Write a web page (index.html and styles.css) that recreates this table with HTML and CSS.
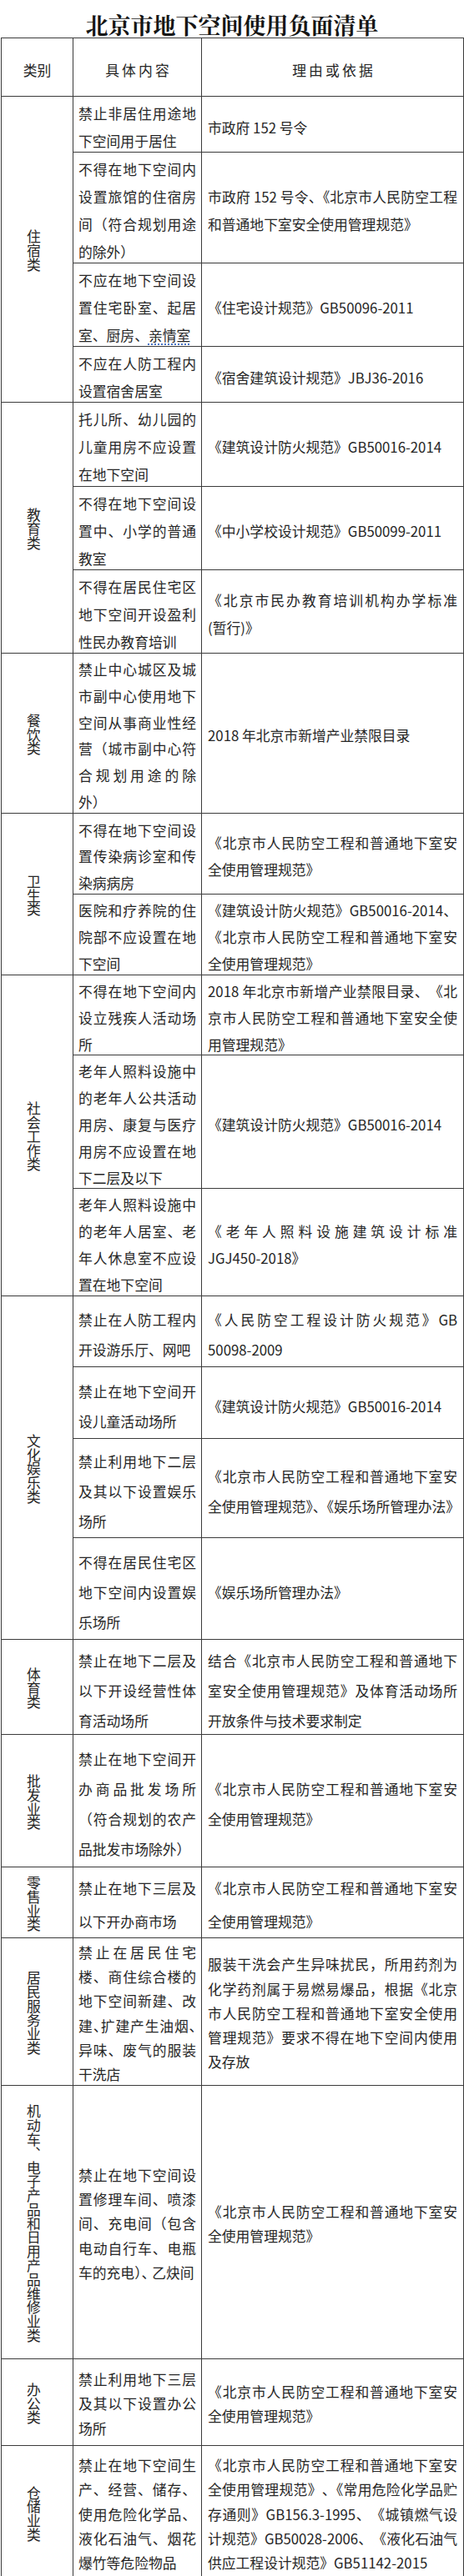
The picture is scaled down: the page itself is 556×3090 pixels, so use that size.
FILE: index.html
```html
<!DOCTYPE html>
<html lang="zh-CN">
<head>
<meta charset="utf-8">
<title>北京市地下空间使用负面清单</title>
<link rel="stylesheet" href="styles.css">
</head>
<body>
<h1 class="title">北京市地下空间使用负面清单</h1>
<table class="list">
  <colgroup><col class="c-cat"><col class="c-item"><col class="c-basis"></colgroup>
  <thead>
    <tr>
      <th class="h-cat"><div class="tx">类别</div></th>
      <th class="h-item"><div class="tx">具体内容</div></th>
      <th class="h-basis"><div class="tx">理由或依据</div></th>
    </tr>
  </thead>
  <tbody>
    <tr class="lh-a">
      <td class="cat" rowspan="4"><div class="cat-in"><span class="vt">住宿类</span></div></td>
      <td class="item"><div class="tx">禁止非居住用途地下空间用于居住</div></td>
      <td class="basis"><div class="tx">市政府 152 号令</div></td>
    </tr>
    <tr class="lh-a">
      <td class="item"><div class="tx">不得在地下空间内设置旅馆的住宿房间（符合规划用途的除外）</div></td>
      <td class="basis"><div class="tx">市政府 152 号令<span class="pt">、</span>《北京市人民防空工程和普通地下室安全使用管理规范》</div></td>
    </tr>
    <tr class="lh-a">
      <td class="item"><div class="tx">不应在地下空间设置住宅卧室、起居室、厨房、<span class="squiggle">亲情室</span></div></td>
      <td class="basis"><div class="tx">《住宅设计规范》GB50096-2011</div></td>
    </tr>
    <tr class="lh-a">
      <td class="item"><div class="tx">不应在人防工程内设置宿舍居室</div></td>
      <td class="basis"><div class="tx">《宿舍建筑设计规范》JBJ36-2016</div></td>
    </tr>

    <tr class="lh-a">
      <td class="cat" rowspan="3"><div class="cat-in"><span class="vt">教育类</span></div></td>
      <td class="item"><div class="tx">托儿所、幼儿园的儿童用房不应设置在地下空间</div></td>
      <td class="basis"><div class="tx">《建筑设计防火规范》GB50016-2014</div></td>
    </tr>
    <tr class="lh-a">
      <td class="item"><div class="tx">不得在地下空间设置中、小学的普通教室</div></td>
      <td class="basis"><div class="tx">《中小学校设计规范》GB50099-2011</div></td>
    </tr>
    <tr class="lh-a">
      <td class="item"><div class="tx">不得在居民住宅区地下空间开设盈利性民办教育培训</div></td>
      <td class="basis"><div class="tx">《北京市民办教育培训机构办学标准<span class="nobr">(暂行)》</span></div></td>
    </tr>

    <tr class="lh-b">
      <td class="cat"><div class="cat-in"><span class="vt">餐饮类</span></div></td>
      <td class="item"><div class="tx">禁止中心城区及城市副中心使用地下空间从事商业性经营（城市副中心符合规划用途的除外）</div></td>
      <td class="basis"><div class="tx">2018 年北京市新增产业禁限目录</div></td>
    </tr>

    <tr class="lh-c">
      <td class="cat" rowspan="2"><div class="cat-in"><span class="vt">卫生类</span></div></td>
      <td class="item"><div class="tx">不得在地下空间设置传染病诊室和传染病病房</div></td>
      <td class="basis"><div class="tx">《北京市人民防空工程和普通地下室安全使用管理规范》</div></td>
    </tr>
    <tr class="lh-c">
      <td class="item"><div class="tx">医院和疗养院的住院部不应设置在地下空间</div></td>
      <td class="basis"><div class="tx">《建筑设计防火规范》<span class="nobr">GB50016-2014、</span>《北京市人民防空工程和普通地下室安全使用管理规范》</div></td>
    </tr>

    <tr class="lh-c">
      <td class="cat" rowspan="3"><div class="cat-in"><span class="vt">社会工作类</span></div></td>
      <td class="item"><div class="tx">不得在地下空间内设立残疾人活动场所</div></td>
      <td class="basis"><div class="tx">2018 年北京市新增产业禁限目录、《北京市人民防空工程和普通地下室安全使用管理规范》</div></td>
    </tr>
    <tr class="lh-c">
      <td class="item"><div class="tx">老年人照料设施中的老年人公共活动用房、康复与医疗用房不应设置在地下二层及以下</div></td>
      <td class="basis"><div class="tx">《建筑设计防火规范》GB50016-2014</div></td>
    </tr>
    <tr class="lh-c">
      <td class="item"><div class="tx">老年人照料设施中的老年人居室、老年人休息室不应设置在地下空间</div></td>
      <td class="basis"><div class="tx">《老年人照料设施建筑设计标准<span class="nobr">JGJ450-2018》</span></div></td>
    </tr>

    <tr class="lh-d">
      <td class="cat" rowspan="4"><div class="cat-in"><span class="vt">文化娱乐类</span></div></td>
      <td class="item"><div class="tx">禁止在人防工程内开设游乐厅、网吧</div></td>
      <td class="basis"><div class="tx">《人民防空工程设计防火规范》GB <span class="nobr">50098-2009</span></div></td>
    </tr>
    <tr class="lh-d">
      <td class="item"><div class="tx">禁止在地下空间开设儿童活动场所</div></td>
      <td class="basis"><div class="tx">《建筑设计防火规范》GB50016-2014</div></td>
    </tr>
    <tr class="lh-d">
      <td class="item"><div class="tx">禁止利用地下二层及其以下设置娱乐场所</div></td>
      <td class="basis"><div class="tx">《北京市人民防空工程和普通地下室安全使用管理规范<span class="pt">》、</span>《娱乐场所管理办法<span class="pt">》</span></div></td>
    </tr>
    <tr class="lh-d">
      <td class="item"><div class="tx">不得在居民住宅区地下空间内设置娱乐场所</div></td>
      <td class="basis"><div class="tx">《娱乐场所管理办法》</div></td>
    </tr>

    <tr class="lh-d">
      <td class="cat"><div class="cat-in"><span class="vt">体育类</span></div></td>
      <td class="item"><div class="tx">禁止在地下二层及以下开设经营性体育活动场所</div></td>
      <td class="basis"><div class="tx">结合《北京市人民防空工程和普通地下室安全使用管理规范》及体育活动场所开放条件与技术要求制定</div></td>
    </tr>

    <tr class="lh-d">
      <td class="cat"><div class="cat-in"><span class="vt">批发业类</span></div></td>
      <td class="item"><div class="tx">禁止在地下空间开办商品批发场所（符合规划的农产品批发市场除外）</div></td>
      <td class="basis"><div class="tx">《北京市人民防空工程和普通地下室安全使用管理规范》</div></td>
    </tr>

    <tr class="lh-e">
      <td class="cat"><div class="cat-in"><span class="vt">零售业类</span></div></td>
      <td class="item"><div class="tx">禁止在地下三层及以下开办商市场</div></td>
      <td class="basis"><div class="tx">《北京市人民防空工程和普通地下室安全使用管理规范》</div></td>
    </tr>

    <tr class="lh-f">
      <td class="cat"><div class="cat-in"><span class="vt">居民服务业类</span></div></td>
      <td class="item"><div class="tx">禁止在居民住宅楼、商住综合楼的地下空间新建、改建<span class="pt">、</span>扩建产生油烟<span class="pt">、</span>异味、废气的服装干洗店</div></td>
      <td class="basis"><div class="tx">服装干洗会产生异味扰民，所用药剂为化学药剂属于易燃易爆品，根据《北京市人民防空工程和普通地下室安全使用管理规范》要求不得在地下空间内使用及存放</div></td>
    </tr>

    <tr class="lh-f">
      <td class="cat"><div class="cat-in"><span class="vt">机动车︑电子产品和日用产品维修业类</span></div></td>
      <td class="item"><div class="tx">禁止在地下空间设置修理车间、喷漆间、充电间（包含电动自行车、电瓶车的充电<span class="pt">）</span><span class="pt-s">、</span>乙炔间</div></td>
      <td class="basis"><div class="tx">《北京市人民防空工程和普通地下室安全使用管理规范》</div></td>
    </tr>

    <tr class="lh-f">
      <td class="cat"><div class="cat-in"><span class="vt">办公类</span></div></td>
      <td class="item"><div class="tx">禁止利用地下三层及其以下设置办公场所</div></td>
      <td class="basis"><div class="tx">《北京市人民防空工程和普通地下室安全使用管理规范》</div></td>
    </tr>

    <tr class="lh-f">
      <td class="cat"><div class="cat-in"><span class="vt">仓储业类</span></div></td>
      <td class="item"><div class="tx">禁止在地下空间生产、经营、储存、使用危险化学品、液化石油气、烟花爆竹等危险物品</div></td>
      <td class="basis"><div class="tx">《北京市人民防空工程和普通地下室安全使用管理规范》<span class="pt">、</span>《常用危险化学品贮存通则》GB156.3-1995、《城镇燃气设计规范》GB50028-2006、《液化石油气供应工程设计规范》GB51142-2015</div></td>
    </tr>
  </tbody>
</table>
</body>
</html>
```

FILE: styles.css
```css
html, body {
  margin: 0;
  padding: 0;
  background: #ffffff;
}

body {
  width: 556px;
  font-family: "Noto Sans CJK SC", "Noto Sans", sans-serif;
  font-size: 16.8px;
  color: #262626;
  text-spacing-trim: space-all;
  text-autospace: no-autospace;
}

.title {
  margin: 0;
  padding-top: 15px;
  height: 30px;
  line-height: 30px;
  font-family: "Noto Serif CJK SC", "Noto Sans CJK SC", serif;
  font-size: 27px;
  font-weight: 700;
  text-align: center;
  color: #161616;
}

.list {
  border-collapse: collapse;
  table-layout: fixed;
  width: 554px;
  margin-left: 1px;
}

.c-cat { width: 86px; }
.c-item { width: 154px; }
.c-basis { width: 314px; }

.list th,
.list td {
  border: 1px solid #3b3b3b;
  vertical-align: middle;
  font-weight: 400;
}

.list thead tr { height: 70px; }

.list th {
  padding: 0;
  text-align: center;
  line-height: 33px;
}

.h-item .tx,
.h-basis .tx {
  letter-spacing: 3.2px;
  padding-left: 3.2px;
}

/* Word places the glyphs a little below the middle of each line */
.tx {
  padding-top: 4px;
  margin-bottom: -4px;
}

.lh-f .tx {
  padding-top: 2.5px;
  margin-bottom: -2.5px;
}

.list td.item {
  padding: 0 6px;
  text-align: justify;
}

.list td.basis {
  padding: 0 7px;
  text-align: justify;
}

.list td.cat {
  text-align: center;
  padding: 3px 8px 0 0;
}

.cat-in {
  display: flex;
  justify-content: center;
}

/* one character per line, stacked top to bottom */
.vt {
  display: block;
  width: 16.8px;
  line-height: 16.8px;
  word-break: break-all;
  line-break: anywhere;
  text-align: center;
}

.lh-a { line-height: 33px; }
.lh-b { line-height: 31.9px; }
.lh-c { line-height: 31.8px; }
.lh-d { line-height: 36px; }
.lh-e { line-height: 39.7px; }
.lh-f { line-height: 29.3px; }

/* compressed full-width punctuation, as the word processor sets it */
.pt { letter-spacing: -0.5em; }
.pt-s { letter-spacing: -0.25em; }

.nobr { white-space: nowrap; }

.squiggle {
  text-decoration: underline dotted #4a74c4;
  text-decoration-thickness: 1.5px;
  text-underline-offset: 3px;
}

.list tbody tr:nth-child(1)  { height: 66.7px; }
.list tbody tr:nth-child(2)  { height: 132.3px; }
.list tbody tr:nth-child(3)  { height: 100px; }
.list tbody tr:nth-child(4)  { height: 66px; }
.list tbody tr:nth-child(5)  { height: 100.7px; }
.list tbody tr:nth-child(6)  { height: 99.3px; }
.list tbody tr:nth-child(7)  { height: 98.3px; }
.list tbody tr:nth-child(8)  { height: 191.7px; }
.list tbody tr:nth-child(9)  { height: 97.3px; }
.list tbody tr:nth-child(10) { height: 95.4px; }
.list tbody tr:nth-child(11) { height: 96.6px; }
.list tbody tr:nth-child(12) { height: 159.7px; }
.list tbody tr:nth-child(13) { height: 127.7px; }
.list tbody tr:nth-child(14) { height: 85.6px; }
.list tbody tr:nth-child(15) { height: 86px; }
.list tbody tr:nth-child(16) { height: 119px; }
.list tbody tr:nth-child(17) { height: 121.7px; }
.list tbody tr:nth-child(18) { height: 114.3px; }
.list tbody tr:nth-child(19) { height: 159px; }
.list tbody tr:nth-child(20) { height: 85px; }
.list tbody tr:nth-child(21) { height: 176.7px; }
.list tbody tr:nth-child(22) { height: 328.3px; }
.list tbody tr:nth-child(23) { height: 103.7px; }
.list tbody tr:nth-child(24) { height: 160.7px; }
```
